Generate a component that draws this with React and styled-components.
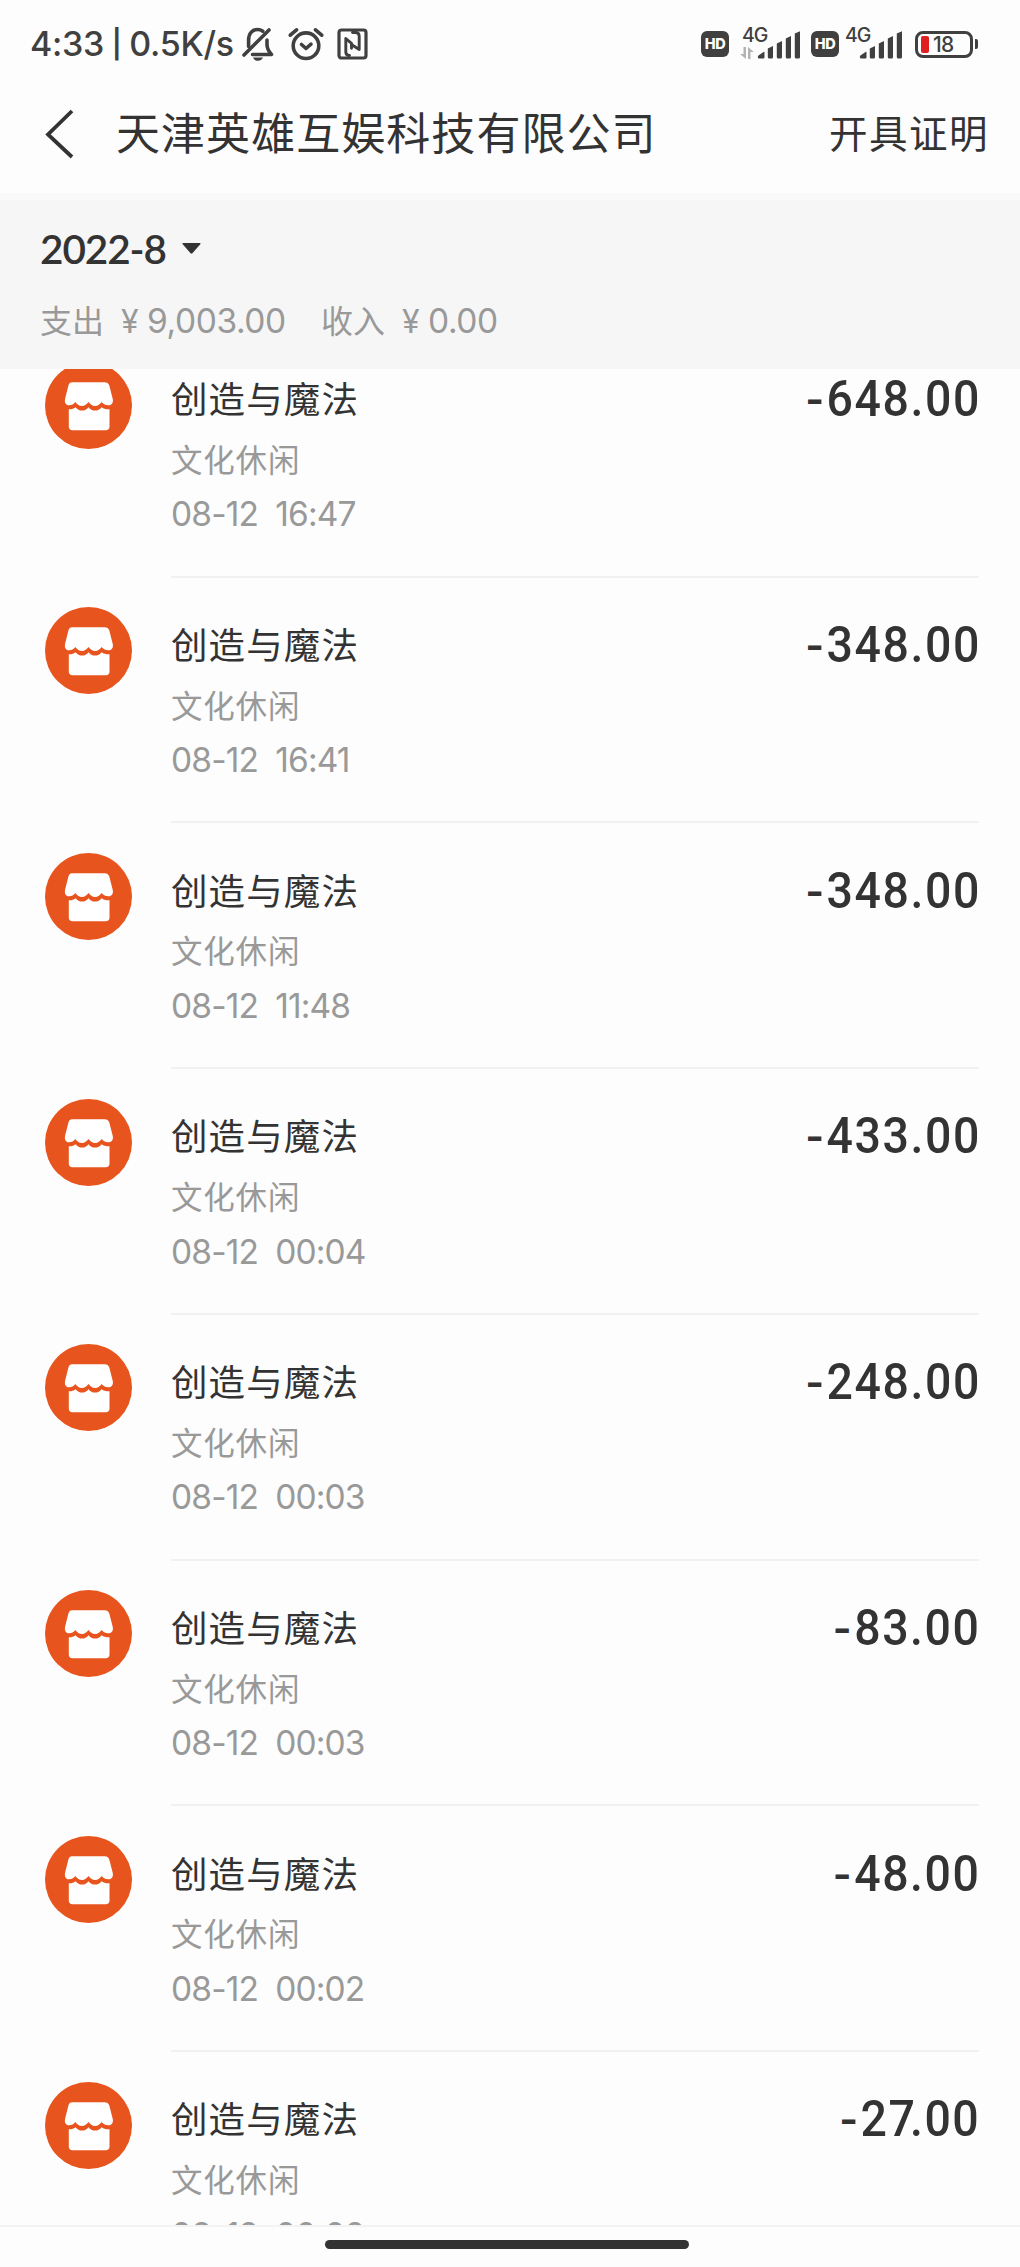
import React from 'react'
import styled, { createGlobalStyle, ThemeProvider } from 'styled-components'

const theme = {
  bg: '#fdfdfd',
  panel: '#f6f6f6',
  text_primary: '#333333',
  text_secondary: '#999999',
  status: '#404040',
  line: '#f1f1f1',
  brand: '#e8541e',
  cjk: '"Noto Sans CJK SC", sans-serif',
  latin: 'Inter, "Noto Sans CJK SC", sans-serif',
}

const GlobalStyle = createGlobalStyle`
  * {
    box-sizing: border-box;
  }
  body {
    margin: 0;
    background: #fdfdfd;
  }
`

const records = [
  { time: '08-12  16:47', amount: '648.00' },
  { time: '08-12  16:41', amount: '348.00' },
  { time: '08-12  11:48', amount: '348.00' },
  { time: '08-12  00:04', amount: '433.00' },
  { time: '08-12  00:03', amount: '248.00' },
  { time: '08-12  00:03', amount: '83.00' },
  { time: '08-12  00:02', amount: '48.00' },
  { time: '08-12  00:02', amount: '27.00' },
]

const Screen = styled.div`
  display: flex;
  flex-direction: column;
  width: 1020px;
  height: 2267px;
  overflow: hidden;
  background: ${({ theme }) => theme.bg};
  color: ${({ theme }) => theme.text_primary};
`

const StatusBar = styled.div`
  display: flex;
  flex: none;
  align-items: center;
  justify-content: space-between;
  height: 88px;
  padding: 0 42px 0 30px;
  color: ${({ theme }) => theme.status};
  font-family: ${({ theme }) => theme.latin};
`

const StatusGroup = styled.div`
  display: flex;
  align-items: center;
  gap: ${({ $gap }) => $gap || 0}px;
  height: 40px;
`

const StatusText = styled.span`
  width: 212px;
  font-size: 34px;
  font-weight: 450;
  line-height: 40px;
  letter-spacing: -0.3px;
  white-space: pre;
`

const Pipe = styled.span`
  margin: 0 -1px;
  font-size: 28px;
  font-weight: 600;
  line-height: 1;
  vertical-align: 2px;
`

const StatusIcon = styled.svg`
  display: block;
  flex: none;
  fill: none;
  stroke: currentColor;
  stroke-width: 3.6;
  stroke-linecap: round;
  stroke-linejoin: round;
`

const HdBadge = styled.span`
  width: 28px;
  height: 26px;
  margin-right: ${({ $gap }) => $gap}px;
  border-radius: 6px;
  background: ${({ theme }) => theme.status};
  color: #fff;
  font-size: 14.5px;
  font-weight: 800;
  line-height: 26px;
  text-align: center;
  letter-spacing: -0.3px;
`

const Signal = styled.div`
  display: grid;
  grid-template-columns: ${({ $lead }) => $lead}px 44px;
  width: ${({ $width }) => $width}px;
  height: 32px;
`

const NetColumn = styled.div`
  display: flex;
  flex-direction: column;
  justify-content: space-between;
  align-items: flex-start;
  white-space: nowrap;
`

const NetType = styled.span`
  margin-left: ${({ $indent }) => $indent || 0}px;
  font-size: 19.5px;
  font-weight: 450;
  line-height: 14px;
  letter-spacing: -1px;
`

const Battery = styled.div`
  display: flex;
  align-items: center;
  width: 58px;
  height: 27px;
  padding-left: 3px;
  border: 3px solid ${({ theme }) => theme.status};
  border-radius: 8px;
  font-size: 21px;
  font-weight: 500;
  letter-spacing: -0.6px;
`

const BatteryLevel = styled.span`
  width: 8px;
  height: 17px;
  margin-right: 4px;
  border-radius: 2px;
  background: #e01f20;
`

const BatteryTip = styled.span`
  width: 3px;
  height: 10px;
  margin-left: 2px;
  border-radius: 0 2px 2px 0;
  background: ${({ theme }) => theme.status};
`

const Header = styled.header`
  display: flex;
  flex: none;
  align-items: center;
  height: 105px;
  padding: 0 31px 13px 44px;
  font-family: ${({ theme }) => theme.cjk};
`

const HeaderTitle = styled.h1`
  flex: 1;
  margin: 0 0 6px 40px;
  font-size: 44px;
  font-weight: 400;
  line-height: 60px;
  letter-spacing: 1.05px;
`

const HeaderAction = styled.span`
  margin-bottom: 6px;
  font-size: 38.5px;
  line-height: 60px;
  letter-spacing: 1.5px;
`

const Summary = styled.section`
  flex: none;
  height: 176px;
  padding: 30px 40px 0;
  border-top: 7px solid #f9f9f9;
  background: ${({ theme }) => theme.panel};
  font-family: ${({ theme }) => theme.latin};
`

const Month = styled.div`
  display: flex;
  align-items: center;
  gap: 16px;
  height: 36px;
  font-family: Lato, sans-serif;
  font-size: 40.5px;
  font-weight: 600;
  letter-spacing: -1.1px;
`

const Totals = styled.div`
  display: flex;
  margin-top: 33px;
  color: ${({ theme }) => theme.text_secondary};
  line-height: 44px;
`

const TotalLabel = styled.span`
  width: ${({ $width }) => $width}px;
  margin-top: -2px;
  font-family: ${({ theme }) => theme.cjk};
  font-size: 32px;
`

const TotalValue = styled.span`
  width: ${({ $width }) => $width}px;
  font-size: 33.5px;
  font-weight: 380;
  letter-spacing: -0.4px;
  white-space: nowrap;
`

const Yen = styled.span`
  display: inline-block;
  width: 26px;
  font-size: 32px;
`

const List = styled.main`
  flex: 1;
  min-height: 0;
  overflow: hidden;
`

// the list is scrolled a little under the summary panel
const Scrolled = styled.div`
  margin-top: -38px;
`

const Row = styled.div`
  display: flex;
  height: 245.72px;
  padding: 30.5px 41px 0 45px;
`

const Detail = styled.div`
  display: flex;
  flex: 1;
  flex-direction: column;
  height: 216.2px;
  margin-left: 39px;
  padding-top: 10.7px;
  border-bottom: 2px solid ${({ theme }) => theme.line};
`

const Line = styled.div`
  display: flex;
  justify-content: space-between;
`

const Name = styled.span`
  font-family: ${({ theme }) => theme.cjk};
  font-size: 36.5px;
  line-height: 52px;
  letter-spacing: 1.1px;
`

const Category = styled.span`
  margin-top: 10.8px;
  color: ${({ theme }) => theme.text_secondary};
  font-family: ${({ theme }) => theme.cjk};
  font-size: 31.5px;
  line-height: 44px;
  letter-spacing: 0.8px;
`

const Time = styled.span`
  margin-top: 12.5px;
  color: ${({ theme }) => theme.text_secondary};
  font-family: ${({ theme }) => theme.latin};
  font-size: 33.5px;
  font-weight: 380;
  line-height: 44px;
  letter-spacing: -0.85px;
  white-space: pre;
`

// narrow numerals
const Amount = styled.span`
  margin: 1px -1.5px 0 0;
  font-family: Roboto, sans-serif;
  font-size: 50.5px;
  font-weight: 500;
  line-height: 52px;
  letter-spacing: 1.7px;
  transform: scaleX(0.92);
  transform-origin: right;
`

const Minus = styled.span`
  margin-right: 1px;
  font-family: Inter, sans-serif;
  font-size: 44px;
  font-weight: 600;
  line-height: 1;
  vertical-align: 1px;
`

const Seven = styled.span`
  letter-spacing: -5.5px;
`

const BottomBar = styled.footer`
  display: flex;
  flex: none;
  justify-content: center;
  height: 42px;
  padding-top: 13px;
  padding-right: 6px;
  border-top: 2px solid #f3f3f3;
`

const HomeBar = styled.div`
  width: 364px;
  height: 9px;
  border-radius: 5px;
  background: ${({ theme }) => theme.text_primary};
`

const StoreIcon = () => (
  <svg width="87" height="87" viewBox="5.2 4.8 87 87">
    <circle cx="48.7" cy="48.3" r="43.5" fill={theme.brand} />
    <path
      fill="#fff"
      d="M32.5 25h32.4c2.2 0 4 1.2 4.6 3.300l3.400 13.200c.9 4.200-1.100 6.600-4.300 6.600-2.800 0-4.900-1.200-6.700-3.300-1.700 2.400-3.700 3.900-6.600 3.900s-4.900-1.500-6.600-3.900c-1.700 2.400-3.700 3.900-6.600 3.900s-4.900-1.500-6.600-3.900c-1.700 2.100-3.600 3.300-6.100 3.300-3.200 0-5-2.400-4.100-6.600l3.300-13.200c.6-2.100 1.700-3.300 3.900-3.300z"
    />
    <path
      fill="#fff"
      d="M29 52c2.500.3 4.500-.4 6.800-2 1.900 2.100 3.800 3.400 6.400 3.400 2.800 0 4.700-1.200 6.500-3.400 1.800 2.200 3.800 3.400 6.600 3.400 2.700 0 4.700-1.300 6.500-3.400 2.300 1.600 5 2.300 7.900 2v17.500c0 2.200-1.500 3.600-3.600 3.600H32.600c-2.100 0-3.600-1.400-3.600-3.600z"
    />
  </svg>
)

const MutedIcon = () => (
  <StatusIcon width="33" height="36" viewBox="0 0 33 36">
    <path d="M2 29 27 4" />
    <path d="M6.600 20.500v-6.300C6.600 7.600 10.300 3.500 15.500 3.500c2 0 3.800.6 5.300 1.700" />
    <path d="M25 14v4.800c0 3.300 1.300 6.200 4.500 9.700H10.500" />
    <path d="M11 31.500h10c-1 2.300-2.700 3.300-5 3.300s-4-1-5-3.300z" fill="currentColor" stroke="none" />
  </StatusIcon>
)

const AlarmIcon = () => (
  <StatusIcon width="36" height="36" viewBox="0 0 36 36">
    <circle cx="18" cy="19.700" r="12.800" />
    <path d="M13.500 18.500 18 22.500l5-4.300" />
    <path d="M2.300 9.200 8.500 3.800M33.700 9.200 27.500 3.800" />
  </StatusIcon>
)

const NfcIcon = () => (
  <StatusIcon width="31" height="32" viewBox="0 0 31 32">
    <rect x="2" y="2" width="27" height="28" rx="2.500" strokeWidth="3.200" />
    <path d="M12.500 27.500c-2.400 0-3.700-1-3.700-3.500V10.500l5.700 4.800v5" strokeWidth="2.900" />
    <path d="M15.500 4.500h2.800c2.600 0 3.900 1.200 3.900 3.700v13.300l-7-4.500" strokeWidth="2.900" />
  </StatusIcon>
)

const Bars = () => (
  <svg width="44" height="32" viewBox="0 0 44 32" fill={theme.status}>
    <path d="M1.500 27.500 6.500 24c.8-.5 1 0 1 .7V29c0 1-.5 1.500-1.300 1.500H2.300C.8 30.500.3 28.600 1.500 27.500z" />
    <path d="M10.800 20.500 16 18v11q0 1.500-1.300 1.500h-2.600q-1.300 0-1.300-1.500z" />
    <path d="M19.800 15.500 25 13v16q0 1.500-1.300 1.500h-2.600q-1.300 0-1.300-1.500z" />
    <path d="M28.800 10.500 34 8v21q0 1.500-1.300 1.500h-2.600q-1.300 0-1.300-1.500z" />
    <path d="M37.800 5.500 43 3.200V29q0 1.500-1.300 1.500h-2.600q-1.300 0-1.300-1.500z" />
  </svg>
)

const DataArrows = () => (
  <svg width="14" height="13" viewBox="0 0 14 13" fill="#b3b3b3">
    <path d="M3.500 0H6v12L0 7h3.500zM8 0l5.800 5H10.500v7H8z" />
  </svg>
)

const BackIcon = () => (
  <svg width="32" height="50" viewBox="0 0 32 50" fill="none" stroke={theme.text_primary} strokeWidth="3.800">
    <path d="M28 2 4 25.500 28 48" />
  </svg>
)

// a 7 before the decimal point sits closer to it
const Digits = ({ value }) => {
  const [whole, cents] = value.split('.')
  if (!whole.endsWith('7')) return <>{value}</>
  return (
    <>
      {whole.slice(0, -1)}
      <Seven>7</Seven>.{cents}
    </>
  )
}

const App = () => {
  return (
    <ThemeProvider theme={theme}>
      <GlobalStyle />
      <Screen>
        <StatusBar>
          <StatusGroup>
            <StatusText>4:33 <Pipe>|</Pipe> 0.5K/s</StatusText>
            <StatusGroup $gap={13}>
              <MutedIcon />
              <AlarmIcon />
              <NfcIcon />
            </StatusGroup>
          </StatusGroup>
          <StatusGroup>
            <HdBadge $gap={11}>HD</HdBadge>
            <Signal $lead={17} $width={71}>
              <NetColumn>
                <NetType $indent={2}>4G</NetType>
                <DataArrows />
              </NetColumn>
              <Bars />
            </Signal>
            <HdBadge $gap={6}>HD</HdBadge>
            <Signal $lead={14} $width={70}>
              <NetColumn>
                <NetType>4G</NetType>
              </NetColumn>
              <Bars />
            </Signal>
            <Battery>
              <BatteryLevel />
              18
            </Battery>
            <BatteryTip />
          </StatusGroup>
        </StatusBar>

        <Header>
          <BackIcon />
          <HeaderTitle>天津英雄互娱科技有限公司</HeaderTitle>
          <HeaderAction>开具证明</HeaderAction>
        </Header>

        <Summary>
          <Month>
            2022-8
            <svg width="19" height="11" viewBox="0 0 19 11" fill={theme.text_primary}>
              <path d="M1.300 0h16.400c.9 0 1.200.7.6 1.300l-7.900 8.900q-.9.900-1.800 0L.7 1.300C.1.700.4 0 1.300 0z" />
            </svg>
          </Month>
          <Totals>
            <TotalLabel $width={81}>支出</TotalLabel>
            <TotalValue $width={200}><Yen>¥</Yen>9,003.00</TotalValue>
            <TotalLabel $width={81}>收入</TotalLabel>
            <TotalValue $width={120}><Yen>¥</Yen>0.00</TotalValue>
          </Totals>
        </Summary>

        <List>
          <Scrolled>
            {records.map((record, index) => (
              <Row key={index}>
                <StoreIcon />
                <Detail>
                  <Line>
                    <Name>创造与魔法</Name>
                    <Amount><Minus>-</Minus><Digits value={record.amount} /></Amount>
                  </Line>
                  <Category>文化休闲</Category>
                  <Time>{record.time}</Time>
                </Detail>
              </Row>
            ))}
          </Scrolled>
        </List>

        <BottomBar>
          <HomeBar />
        </BottomBar>
      </Screen>
    </ThemeProvider>
  )
}

export default App
